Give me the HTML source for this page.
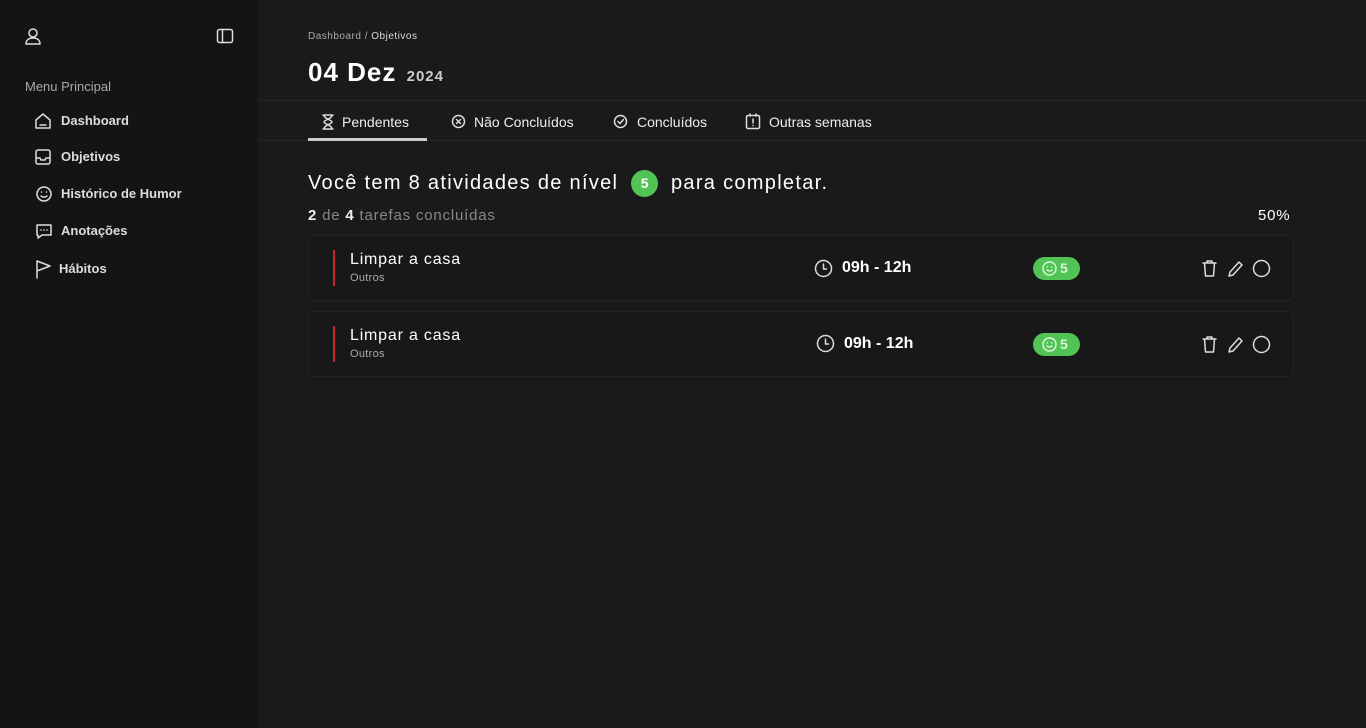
<!DOCTYPE html>
<html><head><meta charset="utf-8"><style>
*{margin:0;padding:0;box-sizing:border-box}
body{width:1366px;height:728px;background:#1a1a1a;font-family:"Liberation Sans",sans-serif;color:#fff;position:relative;overflow:hidden}
.sb{position:absolute;left:0;top:0;width:258px;height:728px;background:#141414}
.a{position:absolute}
svg{position:absolute;fill:none;stroke:#ddd;stroke-width:1.5;stroke-linecap:round;stroke-linejoin:round}
.nav{position:absolute;left:61px;font-size:13px;font-weight:bold;color:#ddd}
.line{position:absolute;left:258px;right:0;height:1px;background:#262626}
.tab{position:absolute;top:114px;font-size:14px;color:#eee}
.card{position:absolute;left:308px;width:986px;height:66px;border:1px solid #242424;border-radius:6px;background:#181818}
.bar{position:absolute;left:24px;top:14px;width:2px;height:36px;background:#c62828}
.t{position:absolute;left:41px;top:15px;font-size:16px;letter-spacing:0.8px}
.s{position:absolute;left:41px;top:36px;font-size:11px;color:#aaa;letter-spacing:0.3px}
.tm{position:absolute;top:23px;font-size:16px;font-weight:bold}
.pill{position:absolute;left:724px;top:21px;width:47px;height:23px;border-radius:12px;background:#52c456;color:#d9f5d9;font-weight:bold;font-size:14px;line-height:23px;padding-left:27px}
</style></head><body>
<div class="sb">
<svg style="left:24px;top:27px" width="18" height="18" viewBox="0 0 18 18"><circle cx="9" cy="6" r="4"/><path d="M2 17c0-4 3-6 7-6s7 2 7 6z"/></svg>
<svg style="left:216px;top:27px" width="18" height="18" viewBox="0 0 18 18"><rect x="1.5" y="2.5" width="15" height="13" rx="2"/><path d="M6.5 2.5v13"/></svg>
<div class="a" style="left:25px;top:79px;font-size:13px;color:#aaa">Menu Principal</div>
<svg style="left:34px;top:112px" width="18" height="18" viewBox="0 0 18 18"><path d="M2 8l7-6 7 6v8H2z"/><path d="M6 13h6"/></svg>
<div class="nav" style="top:113px">Dashboard</div>
<svg style="left:34px;top:148px" width="18" height="18" viewBox="0 0 18 18"><rect x="2" y="2" width="14" height="14" rx="2"/><path d="M2 10h4l1 2h4l1-2h4"/></svg>
<div class="nav" style="top:149px">Objetivos</div>
<svg style="left:35px;top:185px" width="18" height="18" viewBox="0 0 18 18"><circle cx="9" cy="9" r="7"/><path d="M6 11c1.5 1.5 4.5 1.5 6 0"/><path d="M6.5 7h.1M11.5 7h.1"/></svg>
<div class="nav" style="top:186px">Histórico de Humor</div>
<svg style="left:35px;top:222px" width="18" height="18" viewBox="0 0 18 18"><path d="M2 3h14v10H7l-4 3v-3H2z"/><path d="M6 8h.1M9 8h.1M12 8h.1"/></svg>
<div class="nav" style="top:223px">Anotações</div>
<svg style="left:34px;top:259px" width="18" height="20" viewBox="0 0 18 20"><path d="M3 19V2l13 5-13 5"/></svg>
<div class="nav" style="top:261px;left:59px">Hábitos</div>
</div>
<div class="a" style="left:308px;top:31px;font-size:10px;color:#aaa;letter-spacing:0.5px">Dashboard / <span style="color:#ddd">Objetivos</span></div>
<div class="a" style="left:308px;top:57px;font-size:26px;font-weight:bold;letter-spacing:1px">04 Dez <span style="font-size:15px;color:#ccc;margin-left:2px;letter-spacing:1px">2024</span></div>
<div class="line" style="top:100px"></div>
<div class="line" style="top:140px"></div>
<svg style="left:321px;top:114px" width="14" height="16" viewBox="0 0 14 16"><path d="M2 1h10M2 15h10M3 1c0 4 8 5 8 7s-8 3-8 7M11 1c0 4-8 5-8 7s8 3 8 7"/></svg>
<div class="tab" style="left:342px">Pendentes</div>
<div class="a" style="left:308px;top:138px;width:119px;height:3px;background:#ccc"></div>
<svg style="left:451px;top:114px" width="15" height="15" viewBox="0 0 15 15"><circle cx="7.5" cy="7.5" r="6"/><path d="M5.5 5.5l4 4M9.5 5.5l-4 4"/></svg>
<div class="tab" style="left:474px">Não Concluídos</div>
<svg style="left:613px;top:114px" width="15" height="15" viewBox="0 0 15 15"><circle cx="7.5" cy="7.5" r="6"/><path d="M5 7.5l2 2 3.5-4"/></svg>
<div class="tab" style="left:637px">Concluídos</div>
<svg style="left:745px;top:113px" width="16" height="17" viewBox="0 0 16 17"><rect x="1.5" y="2.5" width="13" height="13" rx="1.5"/><path d="M5 1v2M11 1v2M8 6v4M8 12.5v.1"/></svg>
<div class="tab" style="left:769px">Outras semanas</div>
<div class="a" style="left:308px;top:170px;font-size:20px;letter-spacing:1.3px">Você tem 8 atividades de nível <span style="display:inline-block;width:27px;height:27px;border-radius:50%;background:#52c456;text-align:center;line-height:27px;font-size:14px;font-weight:bold;margin:0 6px;vertical-align:1px;letter-spacing:0">5</span> para completar.</div>
<div class="a" style="left:308px;top:207px;font-size:15px;color:#888;letter-spacing:0.8px"><b style="color:#eee">2</b> de <b style="color:#eee">4</b> tarefas concluídas</div>
<div class="a" style="left:1258px;top:207px;font-size:15px;letter-spacing:0.8px">50%</div>

<div class="card" style="top:235px"><div class="bar"></div><div class="t">Limpar a casa</div><div class="s">Outros</div>
<svg style="left:505px;top:23px" width="19" height="19" viewBox="0 0 19 19"><circle cx="9.5" cy="9.5" r="8"/><path d="M9.5 5v5h3"/></svg>
<div class="tm" style="left:533px">09h - 12h</div>
<div class="pill">5<svg style="left:8px;top:3px" width="17" height="17" viewBox="0 0 17 17"><circle cx="8.5" cy="8.5" r="6.5" stroke="#d9f5d9"/><path d="M6 10c1.3 1.3 3.7 1.3 5 0M6.3 7h.1M10.7 7h.1" stroke="#d9f5d9"/></svg></div>
<svg style="left:892px;top:23px" width="17" height="19" viewBox="0 0 17 19"><path d="M2 4h13M6 4V2h5v2M3.5 4l1 13h8l1-13"/></svg>
<svg style="left:917px;top:23px" width="18" height="19" viewBox="0 0 18 19"><path d="M3 17l1-4L13 3l3 3-9 10z"/></svg>
<svg style="left:943px;top:23px" width="19" height="19" viewBox="0 0 19 19"><circle cx="9.5" cy="9.5" r="8"/></svg>
</div>
<div class="card" style="top:311px"><div class="bar"></div><div class="t">Limpar a casa</div><div class="s">Outros</div>
<svg style="left:507px;top:22px" width="19" height="19" viewBox="0 0 19 19"><circle cx="9.5" cy="9.5" r="8"/><path d="M9.5 5v5h3"/></svg>
<div class="tm" style="left:535px">09h - 12h</div>
<div class="pill">5<svg style="left:8px;top:3px" width="17" height="17" viewBox="0 0 17 17"><circle cx="8.5" cy="8.5" r="6.5" stroke="#d9f5d9"/><path d="M6 10c1.3 1.3 3.7 1.3 5 0M6.3 7h.1M10.7 7h.1" stroke="#d9f5d9"/></svg></div>
<svg style="left:892px;top:23px" width="17" height="19" viewBox="0 0 17 19"><path d="M2 4h13M6 4V2h5v2M3.5 4l1 13h8l1-13"/></svg>
<svg style="left:917px;top:23px" width="18" height="19" viewBox="0 0 18 19"><path d="M3 17l1-4L13 3l3 3-9 10z"/></svg>
<svg style="left:943px;top:23px" width="19" height="19" viewBox="0 0 19 19"><circle cx="9.5" cy="9.5" r="8"/></svg>
</div>
</body></html>
